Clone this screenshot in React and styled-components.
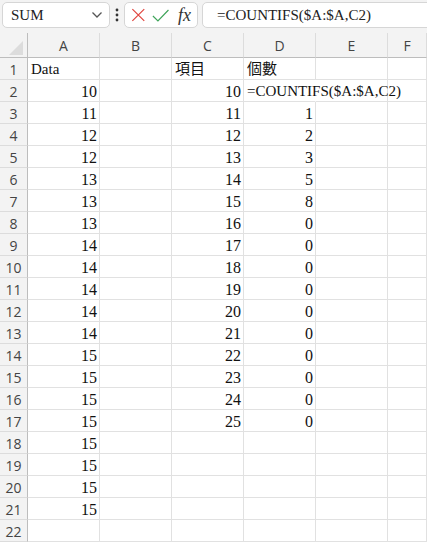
import React from "react";
import styled, { createGlobalStyle } from "styled-components";

const Global = createGlobalStyle`
  html, body { margin: 0; padding: 0; background: #ffffff; overflow: hidden; }
  * { box-sizing: border-box; }
`;

const Page = styled.div`
  width: 427px;
  height: 542px;
  overflow: hidden;
  background: #f3f3f3;
  display: flex;
  flex-direction: column;
`;

const Toolbar = styled.div`
  height: 33px;
  flex: none;
  display: flex;
  align-items: flex-start;
  padding: 2px 0 0 2px;
`;

const Box = styled.div`
  height: 26px;
  background: #ffffff;
  border: 1px solid #d6d6d6;
  border-radius: 5px;
  display: flex;
  align-items: center;
`;

const NameBox = styled(Box)`
  width: 108px;
  padding: 0 6px 0 8px;
  justify-content: space-between;
  font-family: "Liberation Serif", "DejaVu Serif", serif;
  font-size: 15px;
  color: #222;
`;

const Dots = styled.div`
  width: 14px;
  height: 26px;
  display: flex;
  align-items: center;
  justify-content: center;
`;

const FxBox = styled(Box)`
  width: 74px;
  padding: 0 6px 0 6px;
  gap: 6px;
`;

const FxLabel = styled.span`
  font-family: "Liberation Serif", "DejaVu Serif", serif;
  font-style: italic;
  font-size: 18px;
  color: #333;
  margin-left: 3px;
`;

const FormulaBox = styled(Box)`
  flex: 1;
  margin-left: 4px;
  margin-right: -10px;
  padding-left: 14px;
  font-family: "Liberation Serif", "Noto Sans CJK TC", serif;
  font-size: 15px;
  color: #222;
`;

const Sheet = styled.div`
  flex: 1;
  display: grid;
  grid-template-columns: 28px repeat(5, 72px) 1fr;
  grid-template-rows: 25px;
  grid-auto-rows: 22px;
  background: #ffffff;
  overflow: hidden;
`;

const Corner = styled.div`
  background: #f3f3f3;
  border-right: 1px solid #bdbdbd;
  border-bottom: 1px solid #bdbdbd;
  display: flex;
  align-items: flex-end;
  justify-content: flex-end;
  padding: 0 4px 2px 0;
`;

const Triangle = styled.div`
  width: 14px;
  height: 14px;
  background: #dcdcdc;
  clip-path: polygon(100% 0, 100% 100%, 0 100%);
`;

const ColHead = styled.div`
  background: #f3f3f3;
  border-right: 1px solid #dcdcdc;
  border-bottom: 1px solid #bdbdbd;
  display: flex;
  align-items: center;
  justify-content: center;
  font-family: "Open Sans", "DejaVu Sans", sans-serif;
  font-size: 14px;
  color: #444;
  padding-top: 1px;
`;

const RowHead = styled.div`
  background: #f3f3f3;
  border-right: 1px solid #bdbdbd;
  border-bottom: 1px solid #dcdcdc;
  display: flex;
  align-items: center;
  justify-content: center;
  font-family: "Open Sans", "DejaVu Sans", sans-serif;
  font-size: 14px;
  color: #444;
  padding-top: 2px;
`;

const Cell = styled.div`
  border-right: ${(p) => (p.$noRight ? "1px solid transparent" : "1px solid #e1e1e1")};
  border-bottom: 1px solid #e1e1e1;
  display: flex;
  align-items: flex-end;
  justify-content: ${(p) => (p.$num ? "flex-end" : "flex-start")};
  padding: 0 2px 0 3px;
  font-family: "Liberation Serif", "Noto Sans CJK TC", serif;
  font-size: ${(p) => (p.$num ? "16px" : "15px")};
  line-height: 19px;
  color: #111;
  white-space: nowrap;
  overflow: visible;
  position: relative;
  z-index: ${(p) => (p.$over ? 1 : 0)};
`;

const cols = ["A", "B", "C", "D", "E", "F"];

const aData = [10, 11, 12, 12, 13, 13, 13, 14, 14, 14, 14, 14, 15, 15, 15, 15, 15, 15, 15, 15];
const dData = [null, 1, 2, 3, 5, 8, 0, 0, 0, 0, 0, 0, 0, 0, 0, 0];

function cellValue(r, c) {
  if (r === 1) {
    if (c === 0) return { v: "Data" };
    if (c === 2) return { v: "項目" };
    if (c === 3) return { v: "個數" };
    return null;
  }
  if (c === 0 && r >= 2 && r <= 21) return { v: aData[r - 2], num: true };
  if (c === 2 && r >= 2 && r <= 17) return { v: 8 + r, num: true };
  if (c === 3 && r === 2) return { v: "=COUNTIFS($A:$A,C2)", over: true };
  if (c === 3 && r >= 3 && r <= 17) return { v: dData[r - 2], num: true };
  return null;
}

const Chevron = () => (
  <svg width="12" height="8" viewBox="0 0 12 8">
    <path d="M1.5 1.5 L6 6 L10.5 1.5" fill="none" stroke="#555" strokeWidth="1.3" />
  </svg>
);

const VDots = () => (
  <svg width="4" height="14" viewBox="0 0 4 14">
    <circle cx="2" cy="2" r="1.4" fill="#333" />
    <circle cx="2" cy="7" r="1.4" fill="#333" />
    <circle cx="2" cy="12" r="1.4" fill="#333" />
  </svg>
);

const Cross = () => (
  <svg width="16" height="16" viewBox="0 0 16 16">
    <path d="M1.5 1.5 L14.5 14.5 M14.5 1.5 L1.5 14.5" stroke="#e0453f" strokeWidth="1.3" fill="none" />
  </svg>
);

const Check = () => (
  <svg width="19" height="15" viewBox="0 0 19 15">
    <path d="M1 8 L6.5 13.5 L18 1.5" stroke="#3fa45a" strokeWidth="1.3" fill="none" />
  </svg>
);

export default function App() {
  const rows = [];
  for (let r = 1; r <= 22; r++) {
    rows.push(<RowHead key={`h${r}`}>{r}</RowHead>);
    for (let c = 0; c < 6; c++) {
      const cv = cellValue(r, c);
      rows.push(
        <Cell
          key={`c${r}-${c}`}
          $num={cv && cv.num}
          $over={cv && cv.over}
          $noRight={r === 2 && c === 3}
        >
          {cv ? cv.v : ""}
        </Cell>
      );
    }
  }
  return (
    <>
      <Global />
      <Page>
        <Toolbar>
          <NameBox>
            <span>SUM</span>
            <Chevron />
          </NameBox>
          <Dots>
            <VDots />
          </Dots>
          <FxBox>
            <Cross />
            <Check />
            <FxLabel>fx</FxLabel>
          </FxBox>
          <FormulaBox>=COUNTIFS($A:$A,C2)</FormulaBox>
        </Toolbar>
        <Sheet>
          <Corner>
            <Triangle />
          </Corner>
          {cols.map((c) => (
            <ColHead key={c}>{c}</ColHead>
          ))}
          {rows}
        </Sheet>
      </Page>
    </>
  );
}
